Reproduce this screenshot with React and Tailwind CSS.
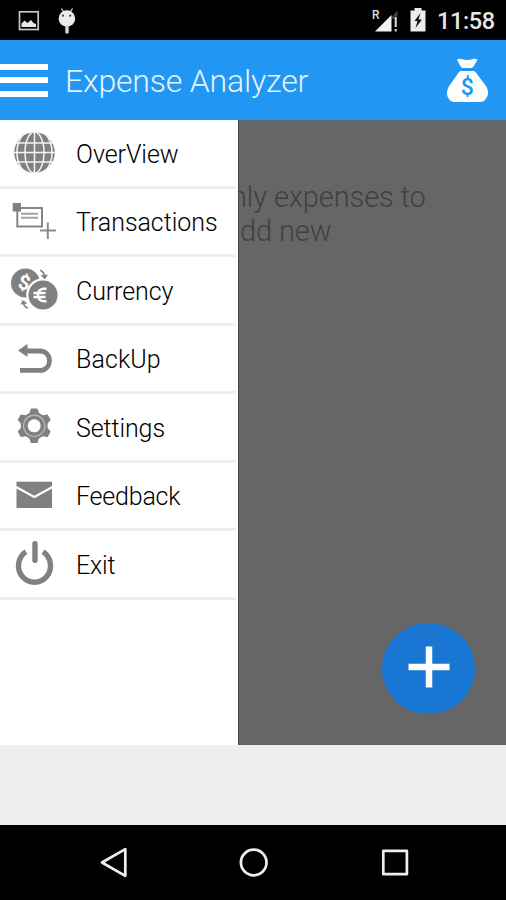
import React from 'react';

const GRAY = '#808080';

function GlobeIcon() {
  return (
    <>
      <circle cx="34.5" cy="32.5" r="20.3" fill={GRAY} />
      <g fill="none" stroke="#f4f4f4" strokeWidth="1.5">
        <path d="M34.5 12v41M13 32.5h43M16 23h37M16 42h37" />
        <ellipse cx="34.5" cy="32.5" rx="9.5" ry="20.5" />
        <path d="M24 13.5C14.500 24 14.500 41 24 51.500M45 13.500C54.500 24 54.500 41 45 51.500" />
      </g>
    </>
  );
}

function TransactionsIcon() {
  return (
    <>
      <rect x="17.300" y="19" width="24.700" height="18.500" fill="none" stroke={GRAY} strokeWidth="1.900" />
      <rect x="12.700" y="14" width="8.300" height="8.500" fill={GRAY} />
      <path d="M21 24.700h17M21 28.700h17" stroke="#a2a2a2" strokeWidth="2" />
      <path d="M40 41.500h16M47.800 33.500v16.500" stroke="#8c8c8c" strokeWidth="2" />
    </>
  );
}

function CurrencyIcon() {
  return (
    <>
      <circle cx="25.500" cy="26" r="14.500" fill={GRAY} />
      <text x="24.300" y="32.500" textAnchor="middle" fontSize="20" fontWeight="700" fill="#fff" transform="rotate(15 24.300 26)">$</text>
      <circle cx="43" cy="38" r="16.800" fill="#fff" />
      <circle cx="43" cy="38" r="14.600" fill={GRAY} />
      <path d="M46.500 31.800h-3.500q-5 1-5 6.200t5 6.200h3.500M33.500 36h12M33.500 40h12" fill="none" stroke="#fff" strokeWidth="2.400" />
      <path d="M40 13.200q4 1.500 4.500 6M28 51q-4-1-4.500-5" fill="none" stroke={GRAY} strokeWidth="1.700" />
      <path d="M40.500 18.500l4.500 3.800 3-4.800zM20.500 47.500l2.200-4.500 4.800 3.500z" fill={GRAY} />
    </>
  );
}

function BackUpIcon() {
  return (
    <>
      <path d="M26 25h14.500a9 9.700 0 0 1 0 19.400H20" fill="none" stroke={GRAY} strokeWidth="4.800" />
      <path d="M18 24.500l9.500-6.500v13z" fill={GRAY} />
    </>
  );
}

function SettingsIcon() {
  return (
    <g transform="translate(34.200 31.800)">
      <g fill={GRAY} stroke={GRAY} strokeWidth="1.500" strokeLinejoin="round">
        {[0, 60, 120, 180, 240, 300].map((a) => (
          <path key={a} d="M-5-10L-2.700-16.500h5.400L5-10z" transform={`rotate(${a})`} />
        ))}
        <circle r="12.700" />
      </g>
      <circle r="10.700" fill="none" stroke="#b8b8b8" strokeWidth="1.200" />
      <circle r="6.500" fill="#fff" />
    </g>
  );
}

function FeedbackIcon() {
  return (
    <>
      <rect x="16.500" y="18.700" width="35.500" height="26.300" fill={GRAY} />
      <path d="M16 24l18.300 10L52.500 24" fill="none" stroke="#fff" strokeWidth="2.200" />
    </>
  );
}

function ExitIcon() {
  return (
    <g fill="none" stroke={GRAY} strokeWidth="5.400">
      <path d="M26 20.800a16 16.500 0 1 0 17 0" />
      <path d="M35 12.800v16.500" strokeLinecap="round" />
    </g>
  );
}

const items = [
  ['OverView', GlobeIcon, 'tracking-[-0.05px]'],
  ['Transactions', TransactionsIcon, 'tracking-[-0.05px]'],
  ['Currency', CurrencyIcon, 'tracking-[-0.1px]'],
  ['BackUp', BackUpIcon, 'tracking-[0.1px]'],
  ['Settings', SettingsIcon, 'tracking-[-0.1px]'],
  ['Feedback', FeedbackIcon, 'tracking-[-0.2px]'],
  ['Exit', ExitIcon, 'tracking-[-0.2px]'],
];

function StatusBar() {
  return (
    <div className="flex h-10 justify-between bg-black">
      <svg className="h-10 w-[90px]" viewBox="0 0 90 40">
        <rect x="19.500" y="11.800" width="18.700" height="17.700" fill="none" stroke="#c8c8c8" strokeWidth="1.700" />
        <path d="M21.500 27v-3.500l3-3 3 2.500 3.500-3 2.500 3 2.500 1v3z" fill="#e8e8e8" />
        <path d="M61.500 8.500l2.500 4M72.500 8.500l-2.500 4" stroke="#d8d8d8" strokeWidth="1.300" />
        <ellipse cx="66.900" cy="18.500" rx="8.300" ry="8.300" fill="#ececec" />
        <rect x="65.300" y="25" width="3.400" height="8.500" rx="1" fill="#d8d8d8" />
        <circle cx="63" cy="15.700" r="1.100" fill="#444" />
        <circle cx="70.200" cy="15.700" r="1.100" fill="#444" />
      </svg>
      <div className="flex">
        <svg className="h-10 w-[66px]" viewBox="370 0 66 40">
          <text x="372" y="19" fontSize="13" fontWeight="500" fill="#ddd" textLength="7.500" lengthAdjust="spacingAndGlyphs">R</text>
          <path d="M391 18l6.500-7.500v6h-3v3z" fill="#444" />
          <path d="M375 31.500L391.500 15v16.500z" fill="#f2f2f2" />
          <path d="M395.700 17v10M395.700 29v2.500" stroke="#ddd" strokeWidth="2" />
          <path d="M410.500 10.500h4V8h7v2.500h4v21h-15z" fill="#ececec" />
          <path d="M420.500 13l-6 8h3l-2 7 6.500-8.500h-3.500z" fill="#111" />
        </svg>
        <span className="w-[70px] pt-[6px] text-[23.5px] leading-[30px] font-medium tracking-[-0.4px] whitespace-nowrap text-[#e6e6e6]">
          <span className="pl-px">11:58</span>
        </span>
      </div>
    </div>
  );
}

function Header() {
  return (
    <header className="flex h-[79.5px] items-center bg-[#2196f3]">
      <div className="flex w-12 flex-col gap-[7.300px] pt-px">
        <span className="h-[6px] bg-white" />
        <span className="h-[6px] bg-white" />
        <span className="h-[6px] bg-white" />
      </div>
      <h1 className="ml-[17px] flex-1 pt-[3px] text-[32px] leading-10 font-light tracking-[-0.180px] whitespace-nowrap text-[#e4f3ff]">Expense Analyzer</h1>
      <svg className="mr-[17px] h-[46px] w-[43px]" viewBox="446 57 43 46">
        <path d="M457 60q2-2 5-.7 5 1.500 10 0 3.500-1.500 5.500.7l-4.500 7q-.5 1-2 1h-8q-1.500 0-2-1z" fill="#fff" />
        <path d="M461 71h12.500q1.500 0 2.800 2l10 13.500q3.500 6.500 0 11.500-2 4-6 4h-26q-4 0-6-4-3-5 .5-11.500l9.500-13.500q1.300-2 2.700-2z" fill="#fff" />
        <text x="467.200" y="94.500" textAnchor="middle" fontSize="23" fontWeight="500" fill="#2196f3">$</text>
      </svg>
    </header>
  );
}

function NavBar() {
  return (
    <nav className="h-[75px] bg-black">
      <svg className="h-[75px] w-[506px]" viewBox="0 825 506 75" fill="none" stroke="#eee" strokeWidth="2.700" strokeLinejoin="round">
        <path d="M102 862.500l23.300-13.300v26.600z" />
        <circle cx="253.700" cy="862.500" r="12.800" />
        <rect x="383.300" y="850.800" width="23.600" height="23.400" />
      </svg>
    </nav>
  );
}

export default function App() {
  return (
    <div className="h-[900px] w-[506px] overflow-hidden bg-[#eee] font-[Roboto,'Liberation_Sans',sans-serif]">
      <StatusBar />
      <Header />
      <main className="flex h-[625.5px]">
        <aside className="w-[238px] shrink-0 bg-white pt-[0.5px]">
          <ul className="pr-[2px]">
            {items.map(([label, Icon, spacing]) => (
              <li key={label} className="flex h-[68.57px] items-center border-b-[3px] border-[#efefef]">
                <svg className="h-[65.57px] w-[76px] shrink-0" viewBox="0 0 76 65.570">
                  <Icon />
                </svg>
                <span className={`pt-[3.5px] text-[25px] leading-8 font-light whitespace-nowrap text-black ${spacing}`}>{label}</span>
              </li>
            ))}
          </ul>
        </aside>
        <section className="flex flex-1 flex-col justify-between overflow-hidden border-l border-[#444] bg-[#666]">
          <p className="-ml-[8px] pt-[60.5px] text-[29px] leading-[34px] font-light tracking-[-0.1px] whitespace-nowrap text-[#414141]">
            <span className="block">nly expenses to</span>
            <span className="block pl-[9px]">dd new</span>
          </p>
          <button className="mr-[31px] mb-[31.5px] flex h-[91px] w-[93px] items-center justify-center self-end rounded-[50%] bg-[#1976d2]">
            <svg className="mb-[2px] h-[42px] w-[42px]" viewBox="0 0 42 42">
              <path d="M21 .5v41M.5 21h41" stroke="#fff" strokeWidth="6.500" />
            </svg>
          </button>
        </section>
      </main>
      <div className="h-20 bg-[#eee]" />
      <NavBar />
    </div>
  );
}
